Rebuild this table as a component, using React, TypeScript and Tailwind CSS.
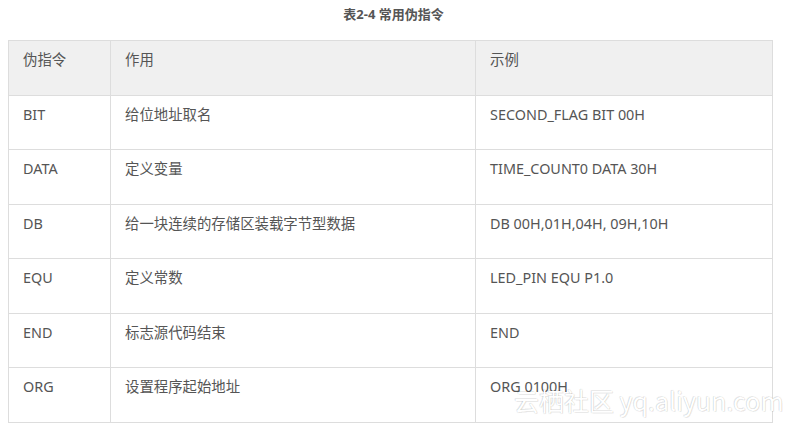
import React from "react";

const rows: [string, string, string][] = [
  ["BIT", "给位地址取名", "SECOND_FLAG BIT 00H"],
  ["DATA", "定义变量", "TIME_COUNT0 DATA 30H"],
  ["DB", "给一块连续的存储区装载字节型数据", "DB 00H,01H,04H, 09H,10H"],
  ["EQU", "定义常数", "LED_PIN EQU P1.0"],
  ["END", "标志源代码结束", "END"],
  ["ORG", "设置程序起始地址", "ORG 0100H"],
];

const font = { fontFamily: '"Noto Sans", "Noto Sans CJK SC", sans-serif' };

function Cell({ children, header }: { children: React.ReactNode; header?: boolean }) {
  return (
    <div
      className={`h-[54.5px] border-r border-b border-[#dddddd] px-[14px] pt-[9px] text-[14.4px] leading-[20px] text-[#555555] ${
        header ? "bg-[#f0f0f0]" : "bg-white"
      }`}
    >
      {children}
    </div>
  );
}

export default function App() {
  return (
    <div className="relative h-[426px] w-[787px] overflow-hidden bg-white" style={font}>
      <div className="flex h-[28px] items-center justify-center pt-[1px] text-[13px] font-bold text-[#555555]">
        表2-4 常用伪指令
      </div>
      <div className="ml-[8px] mt-[12px] grid w-[765px] grid-cols-[102px_365px_297px] border-t border-l border-[#dddddd]">
        <Cell header>伪指令</Cell>
        <Cell header>作用</Cell>
        <Cell header>示例</Cell>
        {rows.map((r) => (
          <React.Fragment key={r[0]}>
            <Cell>{r[0]}</Cell>
            <Cell>{r[1]}</Cell>
            <Cell>{r[2]}</Cell>
          </React.Fragment>
        ))}
      </div>
      <div
        className="absolute left-[514px] top-[385px] whitespace-nowrap text-[25px] leading-[30px] text-white"
        style={{
          fontFamily: '"Noto Sans CJK SC", "Noto Sans", sans-serif',
          textShadow:
            "0 0 1px rgba(0,0,0,0.25), 1px 1px 0 rgba(0,0,0,0.06), -1px -1px 0 rgba(0,0,0,0.06)",
        }}
      >
        云栖社区 yq.aliyun.com
      </div>
    </div>
  );
}
